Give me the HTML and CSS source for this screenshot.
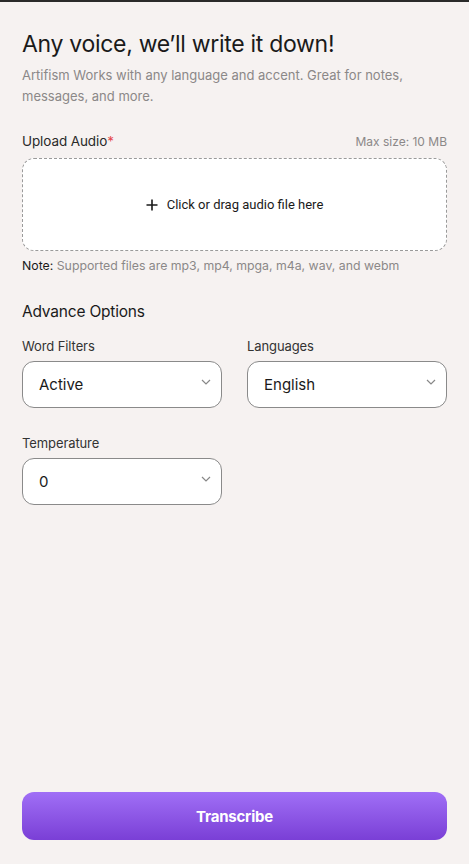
FILE: index.html
```html
<!DOCTYPE html>
<html>
<head>
<meta charset="utf-8">
<link rel="stylesheet" href="styles.css">
</head>
<body>
<div class="page">
  <main class="content">
    <h1 class="title">Any voice, we’ll write it down!</h1>
    <p class="subtitle">Artifism Works with any language and accent. Great for notes, messages, and more.</p>

    <div class="upload-head">
      <span class="label">Upload Audio<span class="req">*</span></span>
      <span class="max">Max size: 10 MB</span>
    </div>
    <div class="dropzone">
      <svg class="plus" width="12" height="12" viewBox="0 0 12 12"><path d="M6 0.5V11.5M0.5 6H11.5" stroke="#1a1a1a" stroke-width="1.6"/></svg>
      <span>Click or drag audio file here</span>
    </div>
    <p class="note"><span class="note-key">Note:</span> Supported files are mp3, mp4, mpga, m4a, wav, and webm</p>

    <h2 class="section">Advance Options</h2>
    <div class="grid">
      <div class="field">
        <span class="flabel">Word Filters</span>
        <div class="select"><span>Active</span><svg class="chev" width="10" height="6" viewBox="0 0 10 6"><path d="M1 1L5 5L9 1" fill="none" stroke="#888" stroke-width="1.2"/></svg></div>
      </div>
      <div class="field">
        <span class="flabel">Languages</span>
        <div class="select"><span>English</span><svg class="chev" width="10" height="6" viewBox="0 0 10 6"><path d="M1 1L5 5L9 1" fill="none" stroke="#888" stroke-width="1.2"/></svg></div>
      </div>
      <div class="field">
        <span class="flabel">Temperature</span>
        <div class="select"><span>0</span><svg class="chev" width="10" height="6" viewBox="0 0 10 6"><path d="M1 1L5 5L9 1" fill="none" stroke="#888" stroke-width="1.2"/></svg></div>
      </div>
    </div>
  </main>
  <footer class="footer">
    <button class="btn">Transcribe</button>
  </footer>
</div>
</body>
</html>
```

FILE: styles.css
```css
* { box-sizing: border-box; }
html, body { margin: 0; padding: 0; }
body {
  background: #f6f2f1;
  font-family: "Inter", "Noto Sans", sans-serif;
  color: #1a1a1a;
}
.page {
  height: 864px;
  border-top: 2px solid #2a2a2a;
  display: flex;
  flex-direction: column;
  padding: 0 22px;
}
.content { flex: 1; }
.title {
  margin: 27px 0 0;
  font-size: 23px;
  font-weight: 400;
  letter-spacing: -0.3px;
  line-height: 30px;
}
.subtitle {
  margin: 6px 0 0;
  font-size: 13px;
  line-height: 21px;
  color: #8b8888;
  letter-spacing: 0;
}
.upload-head {
  margin-top: 25px;
  display: flex;
  justify-content: space-between;
  align-items: center;
  height: 18px;
}
.label { font-size: 13.5px; color: #2a2a2a; letter-spacing: -0.1px; }
.req { color: #e5484d; }
.max { font-size: 12px; color: #8b8888; }
.dropzone {
  margin-top: 8px;
  height: 93px;
  background: #fff;
  border: 1px dashed #9a9a9a;
  border-radius: 12px;
  display: flex;
  align-items: center;
  justify-content: center;
  gap: 9px;
  font-size: 13px;
  color: #1a1a1a;
  font-family: "Roboto", "Inter", sans-serif;
}
.note {
  margin: 7px 0 0;
  font-size: 12.3px;
  color: #8b8888;
  line-height: 16px;
}
.note-key { color: #1a1a1a; }
.section {
  margin: 27px 0 0;
  font-size: 15.5px;
  font-weight: 400;
  line-height: 22px;
  letter-spacing: -0.2px;
}
.grid {
  margin-top: 14px;
  display: grid;
  grid-template-columns: 1fr 1fr;
  column-gap: 25px;
  row-gap: 26px;
}
.field { display: flex; flex-direction: column; gap: 6px; }
.flabel { font-size: 13px; color: #333; line-height: 18px; letter-spacing: -0.1px; }
.select {
  height: 47px;
  background: #fff;
  border: 1px solid #8a8a8a;
  border-radius: 12px;
  display: flex;
  align-items: center;
  justify-content: space-between;
  padding: 0 10px 0 16px;
  font-size: 15px;
  color: #1a1a1a;
}
.chev { margin-top: -6px; }
.footer { padding-bottom: 24px; }
.btn {
  width: 100%;
  height: 48px;
  border: none;
  border-radius: 12px;
  background: linear-gradient(180deg, #a06ff6 0%, #7a3fd6 100%);
  color: #fff;
  font-family: "Inter", sans-serif;
  font-size: 15px;
  font-weight: 700;
  letter-spacing: -0.2px;
}
```
